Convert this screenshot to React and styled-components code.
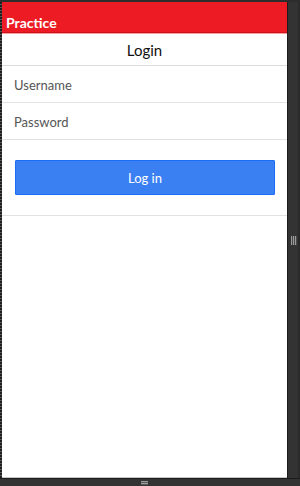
import React from "react";
import styled, { createGlobalStyle } from "styled-components";

const GlobalStyle = createGlobalStyle`
  html, body {
    margin: 0;
    padding: 0;
    background: #2d2d2d;
  }
  * {
    box-sizing: border-box;
  }
`;

export default function App() {
  return (
    <>
      <GlobalStyle />
      <StyledFrame>
        <StyledMain>
          <StyledLeftEdge />
          <StyledScreen>
            <StyledHeader>Practice</StyledHeader>
            <StyledTitle>Login</StyledTitle>
            <StyledField>Username</StyledField>
            <StyledField>Password</StyledField>
            <StyledButtonRow>
              <StyledButton>Log in</StyledButton>
            </StyledButtonRow>
          </StyledScreen>
          <StyledSidePanel>
            <StyledGrip $vertical />
          </StyledSidePanel>
        </StyledMain>
        <StyledBottomPanel>
          <StyledGrip />
        </StyledBottomPanel>
      </StyledFrame>
    </>
  );
}

const StyledFrame = styled.div`
  width: 300px;
  height: 486px;
  display: flex;
  flex-direction: column;
  background: #2d2d2d;
  padding-top: 2px;
  font-family: Lato, "Open Sans", sans-serif;
`;

const StyledMain = styled.div`
  flex: 1;
  display: flex;
  min-height: 0;
`;

const StyledLeftEdge = styled.div`
  width: 2px;
  background: repeating-linear-gradient(
    to bottom,
    #1e1e1e 0 2px,
    #5a5a5a 2px 3px
  );
`;

const StyledScreen = styled.div`
  width: 285px;
  background: #fff;
  display: flex;
  flex-direction: column;
  border-bottom: 1px solid #c8c8c8;
`;

const StyledHeader = styled.div`
  height: 31px;
  background: #ed1c24;
  border-bottom: 1px solid #d0101a;
  box-shadow: 0 1px 0 #f6a0a4;
  color: #fff;
  font-weight: 700;
  font-size: 14px;
  padding: 11px 0 0 4px;
  line-height: 20px;
`;

const StyledTitle = styled.div`
  height: 33px;
  border-bottom: 1px solid #dcdcdc;
  text-align: center;
  font-size: 15px;
  padding-top: 2px;
  line-height: 31px;
  color: #111;
`;

const StyledField = styled.div`
  height: 37px;
  border-bottom: 1px solid #e2e2e2;
  padding: 3px 0 0 12px;
  font-size: 13px;
  line-height: 33px;
  color: #555;
`;

const StyledButtonRow = styled.div`
  padding: 20px 12px 20px 13px;
  border-bottom: 1px solid #e2e2e2;
`;

const StyledButton = styled.div`
  height: 35px;
  background: #3a80f2;
  border: 1px solid #1a6df5;
  border-radius: 1px;
  color: #fff;
  font-size: 13px;
  text-align: center;
  padding-top: 1px;
  line-height: 32px;
`;

const StyledSidePanel = styled.div`
  flex: 1;
  border-left: 1px solid #1c1c1c;
  background: #333;
  display: flex;
  align-items: center;
  justify-content: center;
  box-shadow: inset -2px 0 0 #2a2a2a;
`;

const StyledBottomPanel = styled.div`
  height: 8px;
  border-top: 1px solid #1c1c1c;
  background: #333;
  display: flex;
  justify-content: flex-start;
  padding-left: 141px;
  align-items: center;
`;

const StyledGrip = styled.div`
  width: ${(p) => (p.$vertical ? "6px" : "7px")};
  height: ${(p) => (p.$vertical ? "9px" : "4px")};
  background: ${(p) =>
    p.$vertical
      ? "repeating-linear-gradient(to right, #9a9a9a 0 1px, #4a4a4a 1px 2px)"
      : "repeating-linear-gradient(to bottom, #9a9a9a 0 1px, #5a5a5a 1px 2px)"};
`;
